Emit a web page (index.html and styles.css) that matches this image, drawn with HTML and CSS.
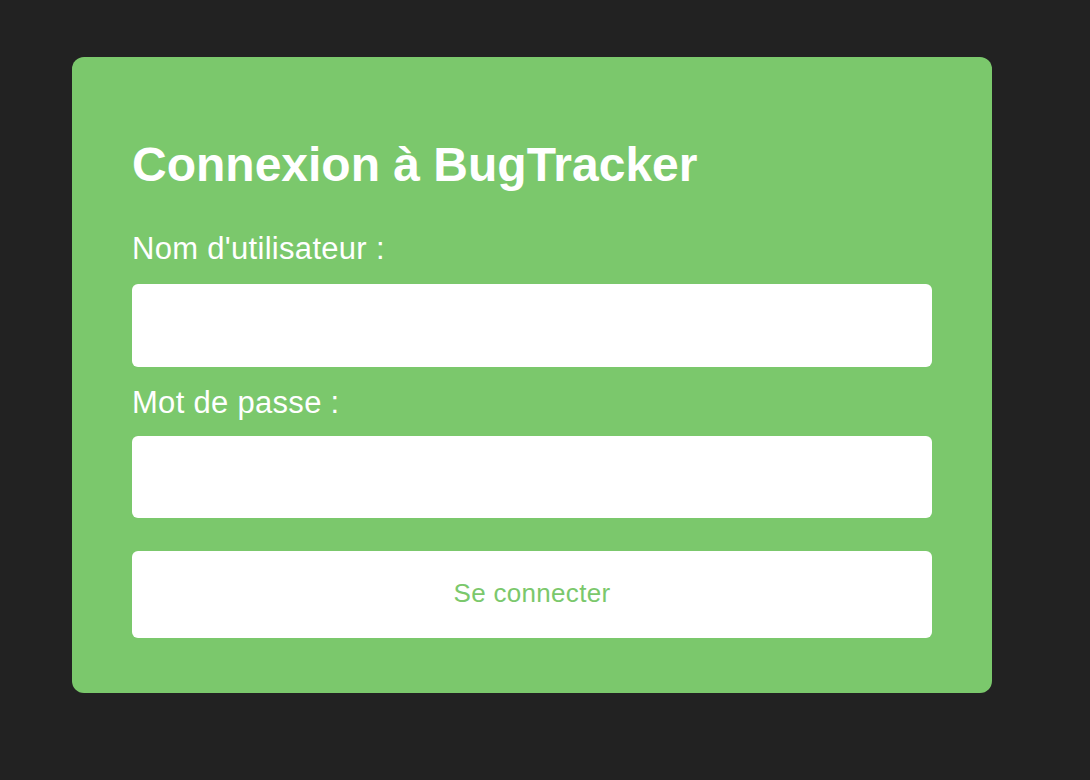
FILE: index.html
```html
<!DOCTYPE html>
<html lang="fr">
<head>
<meta charset="utf-8">
<title>Connexion à BugTracker</title>
<link rel="stylesheet" href="styles.css">
</head>
<body>
<div class="card">
  <h1 class="title">Connexion à BugTracker</h1>
  <form class="form">
    <label class="label label-first" for="user">Nom d'utilisateur :</label>
    <input class="field field-user" id="user" type="text">
    <label class="label label-second" for="pass">Mot de passe :</label>
    <input class="field field-pass" id="pass" type="password">
    <button class="submit" type="button">Se connecter</button>
  </form>
</div>
</body>
</html>
```

FILE: styles.css
```css
html, body {
  margin: 0;
  padding: 0;
  background: #222222;
  font-family: "Liberation Sans", Arial, Helvetica, sans-serif;
}

.card {
  box-sizing: border-box;
  width: 920px;
  margin: 57px 0 0 72px;
  padding: 80px 60px 55px;
  background: #7bc86c;
  border-radius: 12px;
}

.title {
  margin: 0;
  font-size: 48px;
  line-height: 56px;
  font-weight: bold;
  color: #ffffff;
}

.form {
  display: flex;
  flex-direction: column;
}

.label {
  font-size: 31px;
  line-height: 28px;
  letter-spacing: 0.3px;
  color: #ffffff;
  margin-bottom: 21px;
}

.label-first {
  margin-top: 42px;
}

.label-second {
  margin-top: 22px;
  margin-bottom: 19px;
}

.field {
  box-sizing: border-box;
  width: 800px;
  height: 83px;
  border: none;
  border-radius: 6px;
  background: #ffffff;
  outline: none;
  padding: 0 16px;
  font-size: 24px;
}

.field-pass {
  height: 82px;
}

.submit {
  box-sizing: border-box;
  width: 800px;
  height: 87px;
  margin-top: 33px;
  border: none;
  border-radius: 6px;
  background: #ffffff;
  color: #7bc86c;
  font-family: "Liberation Sans", Arial, Helvetica, sans-serif;
  font-size: 26px;
  line-height: 28px;
  letter-spacing: 0.3px;
  padding: 0 0 3px;
  cursor: pointer;
}
```
